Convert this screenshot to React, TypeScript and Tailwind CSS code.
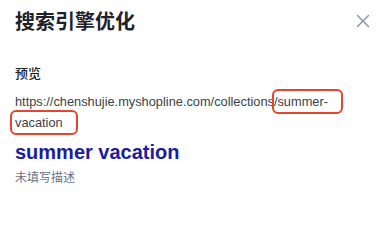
import { X } from 'lucide-react';

const App = () => {
  return (
    <div className="h-[202px] w-[387px] overflow-hidden bg-white px-[15px] font-['Liberation_Sans','Noto_Sans_CJK_SC',sans-serif]">
      <div className="flex items-center justify-between pt-[9px]">
        <h1 className="text-[20px] font-bold leading-[26px] text-[#1f2329]">搜索引擎优化</h1>
        <X className="-mt-[2px] -mr-[2px] h-[22px] w-[22px] text-[#8a93a6]" strokeWidth={1.5} />
      </div>

      <h2 className="mt-[30px] text-[13px] font-medium leading-[18px] text-[#1f2329]">预览</h2>

      <p className="mt-[8px] text-[12.8px] leading-[21px] text-[#3a3f47]">
        https://chenshujie.myshopline.com/collections/
        <span className="rounded-[1px] pr-[10px] outline-2 outline-offset-[3px] outline-[#e2462c] box-decoration-clone">
          summer-vacation
        </span>
      </p>

      <div className="mt-[6px] text-[20px] font-bold leading-[26px] text-[#1c1ca0]">summer vacation</div>
      <div className="mt-[4px] text-[12px] leading-[18px] text-[#6b7280]">未填写描述</div>
    </div>
  );
};

export default App;
